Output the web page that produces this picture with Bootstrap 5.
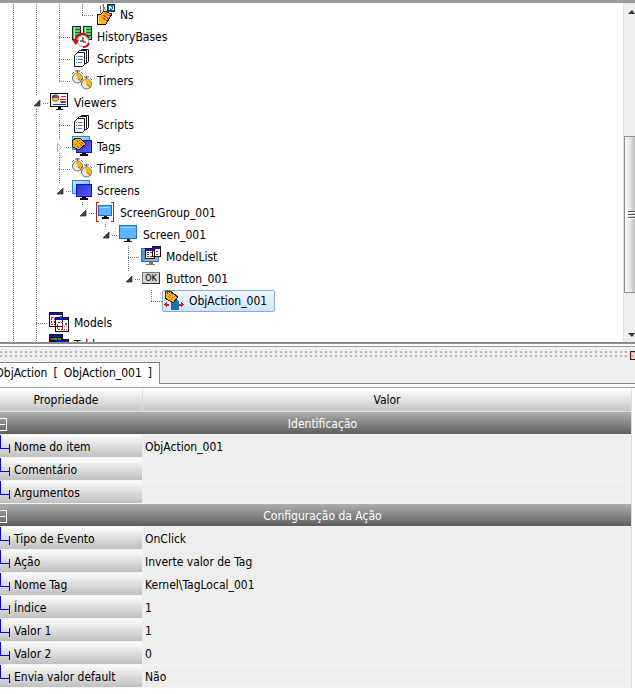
<!DOCTYPE html>
<html lang="pt-BR">
<head>
<meta charset="utf-8">
<meta name="viewport" content="width=device-width, initial-scale=1">
<title>ObjAction_001</title>
<link href="https://cdn.jsdelivr.net/npm/bootstrap@5.3.0/dist/css/bootstrap.min.css" rel="stylesheet">
<style>
body{font-family:"DejaVu Sans Condensed","DejaVu Sans",sans-serif;font-size:12px;line-height:22px;color:#000;background:#fff;padding-bottom:6px}
button{border:0;padding:0;background:none;line-height:0}
.tree-pane{min-height:0;border-top:3px solid #9a9a9a}
.tree-view{padding:1px 0 0 2px;min-width:0}
.tree-row{height:22px;white-space:nowrap}
.guide{width:23px;height:22px;flex:none;--dots-y:repeating-linear-gradient(#777 0 1px,transparent 1px 2px);--dots-x:repeating-linear-gradient(90deg,#777 0 1px,transparent 1px 2px);background-repeat:no-repeat}
.g-line{background-image:var(--dots-y);background-size:1px 22px;background-position:11px 0}
.g-tee{background-image:var(--dots-y),var(--dots-x);background-size:1px 22px,12px 1px;background-position:11px 0,11px 11px}
.g-end{background-image:var(--dots-y),var(--dots-x);background-size:1px 12px,12px 1px;background-position:11px 0,11px 11px}
.g-open{background-image:var(--dots-y),var(--dots-y),var(--dots-x);background-size:1px 3px,1px 5px,6px 1px;background-position:11px 0,11px 17px,18px 11px}
.g-last{background-image:var(--dots-y),var(--dots-x);background-size:1px 3px,6px 1px;background-position:11px 0,18px 11px}
.tree-icon{width:22px;height:22px;flex:none;margin-right:4px;overflow:visible;shape-rendering:crispEdges}
.expander{width:23px;height:22px;display:block}
.picked{border:1px solid #84acdd;border-radius:2px;background:linear-gradient(#f2f8ff,#cfe4fc);margin-left:-1px;padding-right:7px;height:22px;line-height:20px}
.picked .tree-icon{margin-top:-1px}
.scroller{width:12px;flex:none;background:#eee;border-left:1px solid #e2e2e2}
.thumb{border:1px solid #8e8e8e;border-right:0;background:linear-gradient(90deg,#fafafa,#e8e8e8 50%,#bdbdc2)}
.sp-top{flex:116 1 0}.sp-thumb{flex:156 1 0}.sp-bottom{flex:31 1 0}
.splitter{height:20px;border-top:2px solid #8b8b8b;background:#efefef;flex:none}
.split-line{border-top:2px solid #fff;border-bottom:1px solid #9c9c9c;height:3px}
.grip{height:6px;margin:4px 3px 0 0;background:repeating-linear-gradient(transparent 0 2px,#efefef 2px 4px),repeating-linear-gradient(90deg,#b8b8b8 0 2px,#efefef 2px 5px)}
.tab-strip{background:#efefef;border-bottom:1px solid #84858a;flex:none;height:22px}
.tab-item{width:160px;height:22px;border-top:1px solid #85868a;border-right:1px solid #85868a;background:#fff;padding-right:7px;line-height:20px;color:#000;text-decoration:none;white-space:nowrap;gap:6px}
.props-top{height:4px;border-bottom:1px solid #a5a5a5;flex:none}
.props{margin-top:1px;width:calc(100% - 3px);table-layout:fixed;border-collapse:separate;border-spacing:0;border-right:1px solid #ddd}
.props th,.props td{height:23px;padding:3px 0 0;line-height:19px;border-bottom:1px solid #f3f3f3;font-weight:400;white-space:nowrap}
.props thead th{background:linear-gradient(#fff,#c4c4c4);text-align:center;border-bottom-color:#ddd;padding-top:0;line-height:22px}
.props thead th:first-child{width:142px;padding-right:10px}
.props thead th + th{border-left:1px solid #ddd}
.props tbody th{background:linear-gradient(#fcfcfc,#c0c0c0);text-align:left}
.props td{background:#eee;padding-left:3px}
.props .section-head th{background:linear-gradient(#afafaf,#5e5e5e);color:#fff;text-align:center}
.branch{width:10px;height:22px;margin:-3px 4px 0 0;display:block;flex:none;shape-rendering:crispEdges}
</style>
<script src="https://cdn.jsdelivr.net/npm/bootstrap@5.3.0/dist/js/bootstrap.bundle.min.js"></script>
</head>
<body class="d-flex flex-column vh-100 overflow-hidden">
<svg width="0" height="0" class="position-absolute" aria-hidden="true">
<defs>
<symbol id="i-open" viewBox="0 0 23 22"><path d="M9 14h6V8z" fill="#444" stroke="#222" stroke-width=".7"/></symbol>
<symbol id="i-closed" viewBox="0 0 23 22"><path d="M9.500 7.500v8l4-4z" fill="#fff" stroke="#aaa"/></symbol>
<symbol id="i-ns" viewBox="0 0 22 22"><path d="M3 10h4l3-3 8 3-6 10H3z" fill="#f5b41b" stroke="#1d1200"/><path d="M9 11l6 4M8 13l5 4M11 9l5 3" stroke="#d9361c"/><path d="M4 12v6h3" stroke="#ffe788" fill="none"/><path d="M6 9V2M9 0v7M8 1l4 5" stroke="#777" fill="none"/><path d="M13.500 .5h7v7h-7z" fill="#176893" stroke="#06314b"/><path d="M15 6V2h1l2 3h1V2M19 2v4" fill="none" stroke="#fff"/></symbol>
<symbol id="i-history" viewBox="0 0 22 22"><path d="M1.500 .5h8v13h-8zM12.500 .5h8v13h-8z" fill="#57d06a" stroke="#0a3212"/><path d="M3 1v12M14 1v12" stroke="#bdf7bd"/><path d="M4 3.500h5M4 6.500h5M4 9.500h5M15 3.500h5M15 6.500h5M15 9.500h5" stroke="#0d6d20"/><g shape-rendering="auto"><circle cx="12" cy="15" r="5.500" fill="#fff" stroke="#999"/><path d="M5 18A7 7 0 0 1 18 12M18 17A6 6 0 0 1 12 21" fill="none" stroke="#d20b13" stroke-width="2"/><path d="M1 14h7l-3 5z" fill="#d20b13"/><path d="M12 11v5h3M9 15h3" fill="none" stroke="#111"/></g></symbol>
<symbol id="i-scripts" viewBox="0 0 22 22"><g shape-rendering="auto" fill="#fff" stroke="#151515"><path d="M8.500 3.500l2-2h7v12l-2 2h-7z"/><path d="M6.500 4.500l2-2h7v12l-2 2h-7z"/><path d="M3.500 7.500l3-3h7v12l-2 2h-8z"/></g><path d="M5 8.500h1M7 8.500h5M5 11.500h1M7 11.500h5M5 14.500h1M7 14.500h4" stroke="#3f82dc"/></symbol>
<symbol id="i-timers" viewBox="0 0 22 22"><g shape-rendering="auto"><g id="watch"><circle cx="6.500" cy="8" r="5" fill="#ece9df" stroke="#6c6c64"/><path d="M6.500 8L4 3.800A5 5 0 0 1 10 11.500z" fill="#f8bd10"/><path d="M6.500 8l4 4" stroke="#b8341b"/><path d="M6.500 3V0M4 1h5M1 4l2-2M12 4l-2-2" stroke="#555"/></g><use href="#watch" x="9" y="6"/></g></symbol>
<symbol id="i-viewers" viewBox="0 0 22 22"><rect x="2.500" y="1.500" width="17" height="13" rx="1" fill="#f8f8ff" stroke="#111"/><path d="M13 4.500h5M12 7.500h6M12 9.500h6" stroke="#ef2831"/><path d="M5 12.500h13M13 10.500h5" stroke="#173fe0"/><g shape-rendering="auto"><circle cx="7.500" cy="6" r="3.300" fill="#ffc914" stroke="#222" stroke-width=".6"/><path d="M7.500 6V2.700A3.300 3.300 0 0 0 4.200 6z" fill="#2436dc"/><path d="M7.500 6h3.300A3.300 3.300 0 0 0 7.500 2.700z" fill="#ed2630"/></g><path d="M10 15h3v2h2v1H8v-1h2z" fill="#111"/></symbol>
<linearGradient id="sky" x2="1" y2="1"><stop stop-color="#c4efff"/><stop offset="1" stop-color="#55acf9"/></linearGradient>
<linearGradient id="deep" x2="1" y2="1"><stop stop-color="#2730db"/><stop offset="1" stop-color="#5960ff"/></linearGradient>
<symbol id="i-screens" viewBox="0 0 22 22"><rect x="1.500" y=".5" width="17" height="13" rx="1" fill="url(#sky)" stroke="#2f83cf"/><rect x="5.500" y="4.500" width="15" height="12" rx="1" fill="url(#deep)" stroke="#1216a4"/><path d="M11 17h4v1h2v2H9v-2h2z" fill="#111"/></symbol>
<symbol id="i-tags" viewBox="0 0 22 22"><use href="#i-screens" width="22" height="22"/><path d="M1 5l4-3 5 1 5 5-7 6-6-3z" fill="#f0ad1c" stroke="#241600"/><path d="M6 5l5 5M4 8l4 4M8 4l4 4" stroke="#a53419" stroke-dasharray="2 1"/></symbol>
<symbol id="i-group" viewBox="0 0 22 22"><path d="M5 .5H2.500v19H5M17 .5h2.500v19H17" fill="none" stroke="#c71a20"/><rect x="4.500" y="3.500" width="13" height="10" rx="1" fill="#5db4ff" stroke="#1d70b6"/><path d="M6 5.500h10" stroke="#9fd6ff"/><path d="M10 14h3v1h2v2H8v-2h2z" fill="#111"/></symbol>
<symbol id="i-screen" viewBox="0 0 22 22"><rect x="2.500" y="1.500" width="17" height="13" rx="1" fill="#5db4ff" stroke="#1d70c9"/><path d="M4 3.500h14" stroke="#9fd6ff"/><path d="M10 15h3v2h2v1H7v-1h3z" fill="#111"/></symbol>
<symbol id="i-modellist" viewBox="0 0 22 22"><rect x="1.500" y="2.500" width="17" height="13" rx="1" fill="#91b6d5" stroke="#446d91"/><path d="M2 4h3v11H2z" fill="#4e99d6"/><path d="M12.500 .5h8v10h-8zM5.500 2.500h9v10h-9z" fill="#fff" stroke="#111"/><path d="M6 3.500h8M13 1.500h7" stroke="#1717c9" stroke-width="2"/><path d="M7 6.500h6M7 10.500h6M16 5.500h3M16 8.500h3" stroke="#d81c29" stroke-dasharray="2 1"/><path d="M7 8.500h2" stroke="#0c9d24"/><path d="M9 16h4v2h2v1H6v-1h3z" fill="#777"/></symbol>
<symbol id="i-button" viewBox="0 0 22 22"><rect x="2.500" y="4.500" width="17" height="11" rx="1" fill="#d2d2d2" stroke="#777"/><path d="M3 15.500h16.500V5" fill="none" stroke="#333"/><text x="11" y="13" text-anchor="middle" font-size="8" font-family="DejaVu Sans">OK</text></symbol>
<symbol id="i-action" viewBox="0 0 22 22"><path d="M8 12l2-2h5l1 2v8H8z" fill="#1671b4"/><path d="M2 2l5-1 8 6-5 6-8-5z" fill="#f6b321" stroke="#3e2600"/><path d="M6 4l4 4M8 3l4 4M5 6l4 4" stroke="#c4681a" stroke-dasharray="1 1"/><path d="M4 0v4M6 0v3" stroke="#555"/><path d="M1 14.500l3-3v2h2v2H4v2zM21 14.500l-3-3v2h-2v2h2v2z" fill="#d71920"/></symbol>
<symbol id="i-models" viewBox="0 0 22 22"><path d="M1.500 .5h13v14h-13zM7.500 5.500h13v14h-13z" fill="#fff" stroke="#111"/><path d="M2 2h12M8 7h12" stroke="#1010c9" stroke-width="2"/><path d="M3.500 5.500h3v7h-3zM9.500 10.500h5v7h-5z" fill="none" stroke="#df202b" stroke-dasharray="2 1"/><path d="M17 11.500h2M12 4.500h2" stroke="#0b9120" stroke-width="2"/><path d="M16 14.500h3M16 17.500h3" stroke="#df202b" stroke-dasharray="1 1"/></symbol>
<symbol id="i-tables" viewBox="0 0 22 22"><path d="M1.500 .5h13v14h-13zM7.500 5.500h13v14h-13z" fill="#111" stroke="#111"/><path d="M2 2h12M8 7h12" stroke="#1010c9" stroke-width="2"/><path d="M3 5h3" stroke="#df202b" stroke-width="2"/><path d="M6 5h8" stroke="#0bb520" stroke-width="2" stroke-dasharray="3 1"/></symbol>
<symbol id="i-branch" viewBox="0 0 10 22"><path d="M.5 0v13.500H9M9.500 9v9" fill="none" stroke="#0000e0"/></symbol>
</defs>
</svg>

<main class="tree-pane d-flex flex-fill overflow-hidden">
<div class="tree-view flex-fill overflow-hidden" role="tree" aria-label="Itens">
<div class="tree-row d-flex" role="treeitem"><i class="guide g-line"></i><i class="guide g-line"></i><i class="guide g-line"></i><i class="guide g-end"></i><svg class="tree-icon"><use href="#i-ns"/></svg><span>Ns</span></div>
<div class="tree-row d-flex" role="treeitem"><i class="guide g-line"></i><i class="guide g-line"></i><i class="guide g-tee"></i><svg class="tree-icon"><use href="#i-history"/></svg><span>HistoryBases</span></div>
<div class="tree-row d-flex" role="treeitem"><i class="guide g-line"></i><i class="guide g-line"></i><i class="guide g-tee"></i><svg class="tree-icon"><use href="#i-scripts"/></svg><span>Scripts</span></div>
<div class="tree-row d-flex" role="treeitem"><i class="guide g-line"></i><i class="guide g-line"></i><i class="guide g-end"></i><svg class="tree-icon"><use href="#i-timers"/></svg><span>Timers</span></div>
<div class="tree-row d-flex" role="treeitem"><i class="guide g-line"></i><button class="guide g-open" aria-label="Recolher Viewers"><svg class="expander"><use href="#i-open"/></svg></button><svg class="tree-icon"><use href="#i-viewers"/></svg><span>Viewers</span></div>
<div class="tree-row d-flex" role="treeitem"><i class="guide g-line"></i><i class="guide g-line"></i><i class="guide g-tee"></i><svg class="tree-icon"><use href="#i-scripts"/></svg><span>Scripts</span></div>
<div class="tree-row d-flex" role="treeitem"><i class="guide g-line"></i><i class="guide g-line"></i><button class="guide g-open" aria-label="Expandir Tags"><svg class="expander"><use href="#i-closed"/></svg></button><svg class="tree-icon"><use href="#i-tags"/></svg><span>Tags</span></div>
<div class="tree-row d-flex" role="treeitem"><i class="guide g-line"></i><i class="guide g-line"></i><i class="guide g-tee"></i><svg class="tree-icon"><use href="#i-timers"/></svg><span>Timers</span></div>
<div class="tree-row d-flex" role="treeitem"><i class="guide g-line"></i><i class="guide g-line"></i><button class="guide g-last" aria-label="Recolher Screens"><svg class="expander"><use href="#i-open"/></svg></button><svg class="tree-icon"><use href="#i-screens"/></svg><span>Screens</span></div>
<div class="tree-row d-flex" role="treeitem"><i class="guide g-line"></i><i class="guide g-line"></i><i class="guide"></i><button class="guide g-last" aria-label="Recolher ScreenGroup_001"><svg class="expander"><use href="#i-open"/></svg></button><svg class="tree-icon"><use href="#i-group"/></svg><span>ScreenGroup_001</span></div>
<div class="tree-row d-flex" role="treeitem"><i class="guide g-line"></i><i class="guide g-line"></i><i class="guide"></i><i class="guide"></i><button class="guide g-last" aria-label="Recolher Screen_001"><svg class="expander"><use href="#i-open"/></svg></button><svg class="tree-icon"><use href="#i-screen"/></svg><span>Screen_001</span></div>
<div class="tree-row d-flex" role="treeitem"><i class="guide g-line"></i><i class="guide g-line"></i><i class="guide"></i><i class="guide"></i><i class="guide"></i><i class="guide g-tee"></i><svg class="tree-icon"><use href="#i-modellist"/></svg><span>ModelList</span></div>
<div class="tree-row d-flex" role="treeitem"><i class="guide g-line"></i><i class="guide g-line"></i><i class="guide"></i><i class="guide"></i><i class="guide"></i><button class="guide g-last" aria-label="Recolher Button_001"><svg class="expander"><use href="#i-open"/></svg></button><svg class="tree-icon"><use href="#i-button"/></svg><span>Button_001</span></div>
<div class="tree-row d-flex" role="treeitem" aria-selected="true"><i class="guide g-line"></i><i class="guide g-line"></i><i class="guide"></i><i class="guide"></i><i class="guide"></i><i class="guide"></i><i class="guide g-end"></i><span class="picked d-flex"><svg class="tree-icon"><use href="#i-action"/></svg><span>ObjAction_001</span></span></div>
<div class="tree-row d-flex" role="treeitem"><i class="guide g-line"></i><i class="guide g-tee"></i><svg class="tree-icon"><use href="#i-models"/></svg><span>Models</span></div>
<div class="tree-row d-flex" role="treeitem"><i class="guide g-line"></i><i class="guide g-line"></i><svg class="tree-icon"><use href="#i-tables"/></svg><span>Tables</span></div>
</div>
<div class="scroller d-flex flex-column overflow-hidden">
<button aria-label="Rolar para cima"><svg width="11" height="18"><path d="M4 11h7L8 7z" fill="#333"/></svg></button>
<div class="sp-top"></div>
<div class="thumb sp-thumb d-flex align-items-center"><svg width="10" height="10"><path d="M3 1.500h7M3 4.500h7M3 7.500h7" stroke="#555"/><path d="M3 2.500h7M3 5.500h7M3 8.500h7" stroke="#fff"/></svg></div>
<div class="sp-bottom"></div>
<button aria-label="Rolar para baixo"><svg width="11" height="18"><path d="M4 9h7l-3 4z" fill="#333"/></svg></button>
</div>
</main>

<div class="splitter">
<div class="split-line"></div>
<div class="d-flex"><div class="grip flex-fill"></div><button class="mt-1" aria-label="Fechar painel"><svg width="5" height="9" viewBox="0 0 5 9" shape-rendering="crispEdges"><path d="M6 .5H.5v8H6" fill="#f3a8a0" stroke="#4b1420"/><path d="M2 2l3 3-3 3" fill="none" stroke="#fff"/></svg></button></div>
</div>
<nav class="tab-strip"><a href="#props" class="tab-item d-flex justify-content-end overflow-hidden"><span>ObjAction</span><span>[</span><span>ObjAction_001</span><span>]</span></a></nav>
<div class="props-top"></div>
<table class="props" id="props">
<thead><tr><th scope="col">Propriedade</th><th scope="col">Valor</th></tr></thead>
<tbody>
<tr class="section-head"><th colspan="2"><div class="d-flex"><button aria-label="Recolher Identificação"><svg class="branch"><path d="M-2 6.500h8.500v12H-2M0 12.500h5" fill="none" stroke="#fff"/></svg></button><span class="flex-fill">Identificação</span></div></th></tr>
<tr><th scope="row"><div class="d-flex"><svg class="branch"><use href="#i-branch"/></svg>Nome do item</div></th><td>ObjAction_001</td></tr>
<tr><th scope="row"><div class="d-flex"><svg class="branch"><use href="#i-branch"/></svg>Comentário</div></th><td></td></tr>
<tr><th scope="row"><div class="d-flex"><svg class="branch"><use href="#i-branch"/></svg>Argumentos</div></th><td></td></tr>
<tr class="section-head"><th colspan="2"><div class="d-flex"><button aria-label="Recolher Configuração da Ação"><svg class="branch"><path d="M-2 6.500h8.500v12H-2M0 12.500h5" fill="none" stroke="#fff"/></svg></button><span class="flex-fill">Configuração da Ação</span></div></th></tr>
<tr><th scope="row"><div class="d-flex"><svg class="branch"><use href="#i-branch"/></svg>Tipo de Evento</div></th><td>OnClick</td></tr>
<tr><th scope="row"><div class="d-flex"><svg class="branch"><use href="#i-branch"/></svg>Ação</div></th><td>Inverte valor de Tag</td></tr>
<tr><th scope="row"><div class="d-flex"><svg class="branch"><use href="#i-branch"/></svg>Nome Tag</div></th><td>Kernel\TagLocal_001</td></tr>
<tr><th scope="row"><div class="d-flex"><svg class="branch"><use href="#i-branch"/></svg>Índice</div></th><td>1</td></tr>
<tr><th scope="row"><div class="d-flex"><svg class="branch"><use href="#i-branch"/></svg>Valor 1</div></th><td>1</td></tr>
<tr><th scope="row"><div class="d-flex"><svg class="branch"><use href="#i-branch"/></svg>Valor 2</div></th><td>0</td></tr>
<tr><th scope="row"><div class="d-flex"><svg class="branch"><use href="#i-branch"/></svg>Envia valor default</div></th><td>Não</td></tr>
</tbody>
</table>
</body>
</html>
